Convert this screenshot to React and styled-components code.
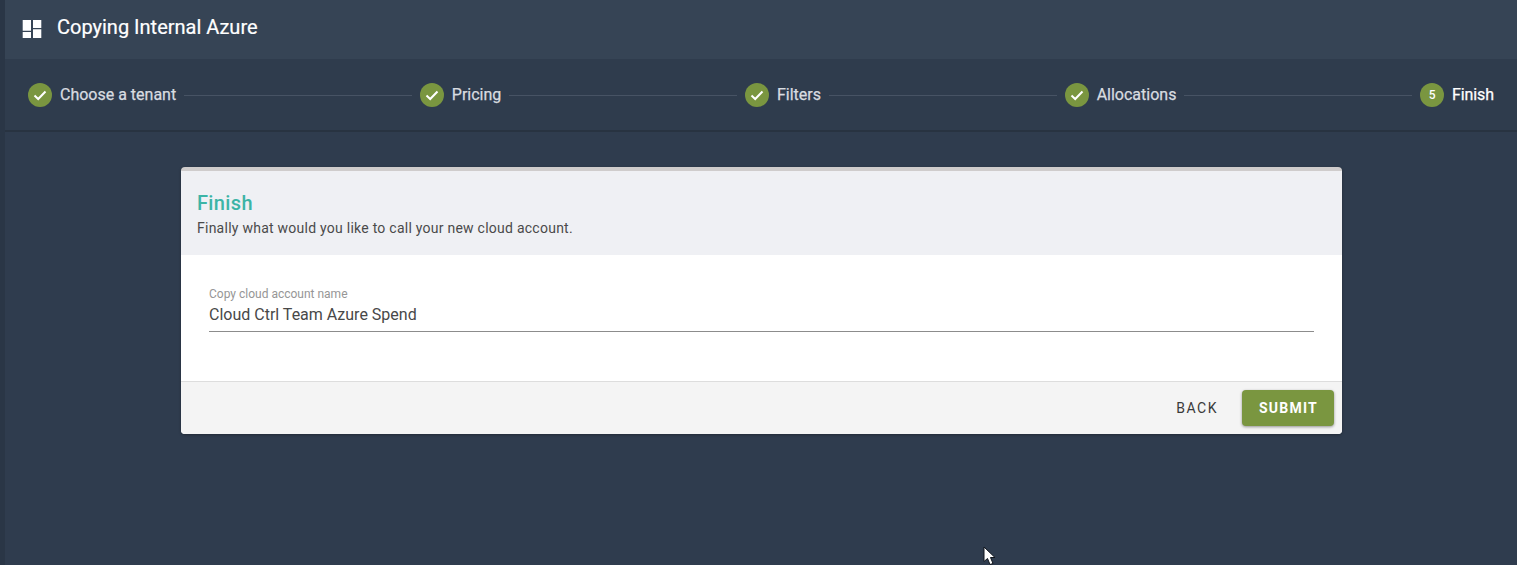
import React from "react";
import styled, { createGlobalStyle } from "styled-components";

const Global = createGlobalStyle`
  html, body { margin: 0; padding: 0; height: 100%; background: #2f3c4e; }
  body { font-family: Roboto, "Liberation Sans", sans-serif; overflow: hidden; }
  * { box-sizing: border-box; }
`;

const Page = styled.div`
  position: relative;
  display: flex;
  width: 1517px;
  height: 565px;
  background: #2f3c4e;
`;
const Rail = styled.div`
  width: 5px;
  flex: none;
  background: #2a3646;
`;
const Main = styled.main`
  flex: 1;
  min-width: 0;
  display: flex;
  flex-direction: column;
`;
const TopBar = styled.header`
  height: 59px;
  display: flex;
  align-items: center;
  gap: 15px;
  padding: 0 0 5px 17px;
  background: #364455;
  color: #fff;
`;
const BrandIcon = styled.svg`
  flex: none;
  margin-top: 6px;
`;
const Title = styled.h1`
  margin: 0;
  font-size: 20px;
  font-weight: 400;
  line-height: 24px;
  color: #fff;
  -webkit-text-stroke: 0.2px #fff;
`;
const Stepper = styled.nav`
  height: 73px;
  display: flex;
  align-items: center;
  gap: 8px;
  padding: 1px 23px 0 23px;
  background: #2f3c4d;
  border-bottom: 2px solid #283341;
`;
const Step = styled.div`
  display: flex;
  align-items: center;
  gap: 8px;
  flex: none;
`;
const StepCircle = styled.span`
  width: 24px;
  height: 24px;
  border-radius: 50%;
  background: #7a9640;
  color: #fff;
  font-size: 12px;
  font-weight: 500;
  display: flex;
  align-items: center;
  justify-content: center;
`;
const StepLabel = styled.span`
  font-size: 16px;
  line-height: 20px;
  font-weight: 400;
  letter-spacing: ${(p) => (p.$active ? "-0.1px" : "0")};
  color: ${(p) => (p.$active ? "#ffffff" : "#d9dce0")};
  -webkit-text-stroke: 0.25px ${(p) => (p.$active ? "#ffffff" : "#d9dce0")};
`;
const Connector = styled.span`
  flex: 1;
  height: 1px;
  background: #475364;
`;
const Content = styled.div`
  display: flex;
  justify-content: center;
  padding: 35px 0 0 1px;
`;
const Card = styled.section`
  width: 1161px;
  height: 267px;
  display: flex;
  flex-direction: column;
  border-radius: 4px;
  overflow: hidden;
  background: #fff;
  border-top: 4px solid #cfcccc;
  box-shadow: 0 1px 3px rgba(0, 0, 0, 0.3);
`;
const CardHead = styled.div`
  height: 84px;
  padding: 20px 16px 0;
  background: #eff0f4;
`;
const CardTitle = styled.h2`
  margin: 0;
  font-size: 20px;
  line-height: 24px;
  font-weight: 500;
  letter-spacing: 0.35px;
  color: #3cb4a6;
`;
const CardSub = styled.p`
  margin: 3px 0 0;
  font-size: 14px;
  line-height: 20px;
  letter-spacing: 0.25px;
  color: #4a4a4a;
`;
const CardBody = styled.div`
  flex: 1;
  padding: 32px 28px 0;
`;
const FieldLabel = styled.label`
  display: block;
  font-size: 12px;
  line-height: 14px;
  color: #969696;
`;
const FieldInput = styled.input`
  display: block;
  width: 100%;
  height: 31px;
  padding: 0 0 4px;
  border: 0;
  border-bottom: 1px solid #8c8c8c;
  outline: 0;
  background: transparent;
  font: 400 16px Roboto, sans-serif;
  color: #484848;
`;
const CardFoot = styled.footer`
  height: 53px;
  display: flex;
  align-items: center;
  justify-content: flex-end;
  gap: 8px;
  padding: 0 8px;
  background: #f4f4f4;
  border-top: 1px solid #dddddd;
`;
const TextButton = styled.button`
  height: 36px;
  padding: 0 16px;
  border: 0;
  background: transparent;
  font: 400 14px Roboto, sans-serif;
  letter-spacing: 1.5px;
  color: #3a3a3a;
`;
const SubmitButton = styled(TextButton)`
  width: 92px;
  padding: 0 0 0 1px;
  border-radius: 4px;
  background: #7a9640;
  font-weight: 700;
  letter-spacing: 1.25px;
  color: #fff;
  box-shadow: 0 1px 3px rgba(0, 0, 0, 0.4);
`;
const Cursor = styled.svg`
  position: absolute;
  left: 983px;
  top: 546px;
`;

const steps = ["Choose a tenant", "Pricing", "Filters", "Allocations"];

const Check = () => (
  <svg width="16" height="16" viewBox="0 0 16 16" fill="none">
    <path d="M2.5 8.5 L6.2 12 L13.5 4.5" stroke="#fff" strokeWidth="2" />
  </svg>
);

const GridIcon = () => (
  <BrandIcon width="20" height="20" viewBox="0 0 20 20" fill="#fff">
    <path d="M.7 0H9v10.700H.7zM11 0h8.300v8H11zM.7 12H9v6H.7zM11 9.300h8.300V18H11z" />
  </BrandIcon>
);

export default function App() {
  return (
    <Page>
      <Global />
      <Rail />
      <Main>
        <TopBar>
          <GridIcon />
          <Title>Copying Internal Azure</Title>
        </TopBar>
        <Stepper>
          {steps.map((s) => (
            <React.Fragment key={s}>
              <Step>
                <StepCircle><Check /></StepCircle>
                <StepLabel>{s}</StepLabel>
              </Step>
              <Connector />
            </React.Fragment>
          ))}
          <Step>
            <StepCircle>5</StepCircle>
            <StepLabel $active>Finish</StepLabel>
          </Step>
        </Stepper>
        <Content>
          <Card>
            <CardHead>
              <CardTitle>Finish</CardTitle>
              <CardSub>Finally what would you like to call your new cloud account.</CardSub>
            </CardHead>
            <CardBody>
              <FieldLabel htmlFor="copy-name">Copy cloud account name</FieldLabel>
              <FieldInput id="copy-name" defaultValue="Cloud Ctrl Team Azure Spend" />
            </CardBody>
            <CardFoot>
              <TextButton>BACK</TextButton>
              <SubmitButton>SUBMIT</SubmitButton>
            </CardFoot>
          </Card>
        </Content>
      </Main>
      <Cursor width="14" height="20" viewBox="0 0 14 20">
        <path d="M1 1 L1 15.500 L4.500 12.500 L7 18.500 L10 17.500 L7.500 11.500 L12 11.500 Z" fill="#fff" stroke="#10151c" strokeWidth="1" />
      </Cursor>
    </Page>
  );
}
